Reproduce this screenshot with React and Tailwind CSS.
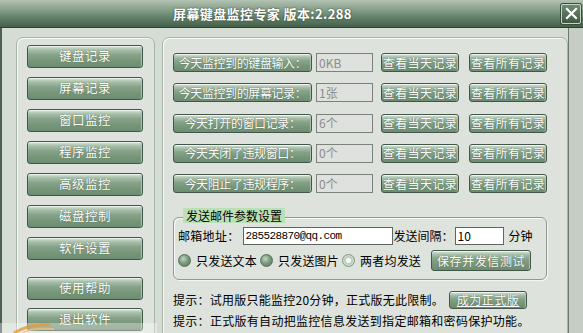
import React from 'react';

const sideItems = [
  { label: '键盘记录', gap: 'mt-0' },
  { label: '屏幕记录', gap: 'mt-[9px]' },
  { label: '窗口监控', gap: 'mt-[9px]' },
  { label: '程序监控', gap: 'mt-[9px]' },
  { label: '高级监控', gap: 'mt-[9px]' },
  { label: '磁盘控制', gap: 'mt-[9px]' },
  { label: '软件设置', gap: 'mt-[9px]' },
  { label: '使用帮助', gap: 'mt-[17px]' },
  { label: '退出软件', gap: 'mt-[8px]' },
];

const stats = [
  { label: '今天监控到的键盘输入：', value: '0KB' },
  { label: '今天监控到的屏幕记录：', value: '1张' },
  { label: '今天打开的窗口记录：', value: '6个' },
  { label: '今天关闭了违规窗口：', value: '0个' },
  { label: '今天阻止了违规程序：', value: '0个' },
];

function GreenBtn({ className, children }) {
  return (
    <div
      className={
        'flex items-center justify-center whitespace-nowrap rounded-[3px] border border-[#42574a] bg-[linear-gradient(to_bottom,#dbe7db_0%,#a9c0ab_18%,#86a38a_42%,#779679_70%,#6c8b70_100%)] text-white shadow-[inset_0_1px_0_#eef5ee,inset_-1px_0_0_#a9bfab] [text-shadow:0_0_1px_#3f533f] ' +
        className
      }
    >
      {children}
    </div>
  );
}

function Radio({ on }) {
  return (
    <div
      className={
        on
          ? 'h-[13px] w-[13px] shrink-0 rounded-full border border-[#7f977f] bg-[radial-gradient(circle,#f4f7f4_0_28%,#b3c6b3_42%,#d3ddd3_65%,#93a894_100%)]'
          : 'h-[13px] w-[13px] shrink-0 rounded-full border border-[#56705a] bg-[radial-gradient(circle_at_40%_35%,#c4d6c4_0%,#7d9c81_45%,#55725a_100%)]'
      }
    />
  );
}

export default function App() {
  return (
    <div className="relative h-[333px] w-[583px] overflow-hidden bg-[#c5cdc5] font-['Noto_Sans_CJK_SC',sans-serif] text-[12px] leading-none text-black">
      {/* title bar */}
      <div className="flex h-[28px] items-center border-b border-[#2f3f31] bg-[linear-gradient(to_bottom,#b4c3b4_0%,#8ea590_30%,#62806a_65%,#45604b_100%)] pl-[173px] pr-[2px]">
        <span className="text-[13px] font-bold tracking-[0.4px] text-white [text-shadow:0_0_2px_#2e3e2f]">
          屏幕键盘监控专家 版本:2.288
        </span>
        <div className="ml-auto flex h-[20px] w-[20px] items-center justify-center rounded-[2px] border border-[#c9d4c9] bg-[linear-gradient(to_bottom,#6f8a73,#3f5843)] shadow-[0_0_0_1px_#3b4d3d]">
          <svg width="13" height="13" viewBox="0 0 13 13">
            <path d="M2 2 L11 11 M11 2 L2 11" stroke="#ffffff" strokeWidth="2.2" strokeLinecap="square" />
          </svg>
        </div>
      </div>

      <div className="flex h-[305px]">
        <div className="flex w-[569px] gap-[7px] border-l-2 border-r border-l-[#4f5f52] border-r-[#6b7b6b] bg-[#d5dcd4] pl-[14px] pt-[9px]">
          {/* left panel */}
          <div className="flex h-[320px] w-[139px] flex-col rounded-t-[7px] border border-[#a9b4a9] bg-[#dde3dc] px-[10px] pt-[7px] shadow-[inset_1px_1px_0_#f6f9f6]">
            {sideItems.map((item) => (
              <GreenBtn key={item.label} className={'h-[23px] w-[116px] text-[12.5px] tracking-[0.5px] ' + item.gap}>
                {item.label}
              </GreenBtn>
            ))}
          </div>

          {/* right panel */}
          <div className="flex h-[320px] w-[406px] flex-col rounded-t-[7px] border border-[#a9b4a9] bg-[#dde3dc] pl-[10px] pt-[15px] shadow-[inset_1px_1px_0_#f6f9f6]">
            <div className="flex flex-col gap-[11.3px]">
              {stats.map((row) => (
                <div key={row.label} className="flex h-[19px] items-center">
                  <GreenBtn className="h-[19px] w-[139px] text-[12px] tracking-[-0.4px]">{row.label}</GreenBtn>
                  <div className="ml-[4px] flex h-[19px] w-[57px] items-center border border-[#7a827a] bg-[#dfe1de] pl-[2px] text-[12px] text-[#8a8d8a]">
                    {row.value}
                  </div>
                  <GreenBtn className="ml-[8px] h-[19px] w-[78px] text-[12px] tracking-[0.4px]">查看当天记录</GreenBtn>
                  <GreenBtn className="ml-[10px] h-[19px] w-[78px] text-[12px] tracking-[0.4px]">查看所有记录</GreenBtn>
                </div>
              ))}
            </div>

            {/* mail settings group */}
            <div className="relative mt-[24px] h-[63px] w-[374px] rounded-[6px] border border-[#8f9a8f] bg-[#dee3dd] px-[4px] pt-[9px] shadow-[inset_1px_1px_0_#f8fbf8,1px_1px_0_#f4f7f4]">
              <div className="absolute left-[9px] top-[-10px] flex h-[15px] items-center bg-[#bce0b6] px-[3px] text-[12px]">
                发送邮件参数设置
              </div>
              <div className="flex h-[18px] items-center">
                <span className="tracking-[0.3px]">邮箱地址：</span>
                <div className="ml-[3px] flex h-[18px] w-[150px] items-center border border-[#5f655f] bg-white pl-[2px] font-['Liberation_Mono',monospace] text-[11px] tracking-[-0.6px]">
                  285528870@qq.com
                </div>
                <span className="ml-[1px]">发送间隔：</span>
                <div className="ml-[1px] flex h-[18px] w-[49px] items-center border border-[#5f655f] bg-white pl-[2px] text-[12px]">
                  10
                </div>
                <span className="ml-[5px]">分钟</span>
              </div>
              <div className="mt-[5px] flex h-[21px] items-center">
                <Radio />
                <span className="ml-[5px] tracking-[0.2px]">只发送文本</span>
                <div className="ml-[3px]">
                  <Radio />
                </div>
                <span className="ml-[5px] tracking-[0.2px]">只发送图片</span>
                <div className="ml-[3px]">
                  <Radio on />
                </div>
                <span className="ml-[5px] tracking-[0.2px]">两者均发送</span>
                <GreenBtn className="ml-[10px] h-[21px] w-[100px] text-[12px] tracking-[0.6px]">保存并发信测试</GreenBtn>
              </div>
            </div>

            {/* hints */}
            <div className="mt-[11px] flex h-[18px] items-center">
              <span className="tracking-[0.25px]">提示：试用版只能监控20分钟，正式版无此限制。</span>
              <GreenBtn className="ml-[5px] h-[18px] w-[78px] text-[12px] tracking-[0.5px] underline">成为正式版</GreenBtn>
            </div>
            <div className="mt-[6px] tracking-[0.3px]">提示：正式版有自动把监控信息发送到指定邮箱和密码保护功能。</div>
          </div>
        </div>
        <div className="flex-1 bg-[#c5cdc5]" />
      </div>

      {/* overlay strip at bottom left */}
      <div className="absolute left-0 top-[323px] h-[10px] w-[157px] bg-white/35">
        <svg width="60" height="10" viewBox="0 0 60 10" className="absolute left-[10px] top-0">
          <path d="M4 10 C 14 4, 26 1, 40 2" stroke="#e39a3a" strokeWidth="3" fill="none" opacity="0.8" />
          <path d="M12 10 C 20 6, 30 5, 44 6" stroke="#f3c27a" strokeWidth="2" fill="none" opacity="0.7" />
        </svg>
      </div>
    </div>
  );
}
